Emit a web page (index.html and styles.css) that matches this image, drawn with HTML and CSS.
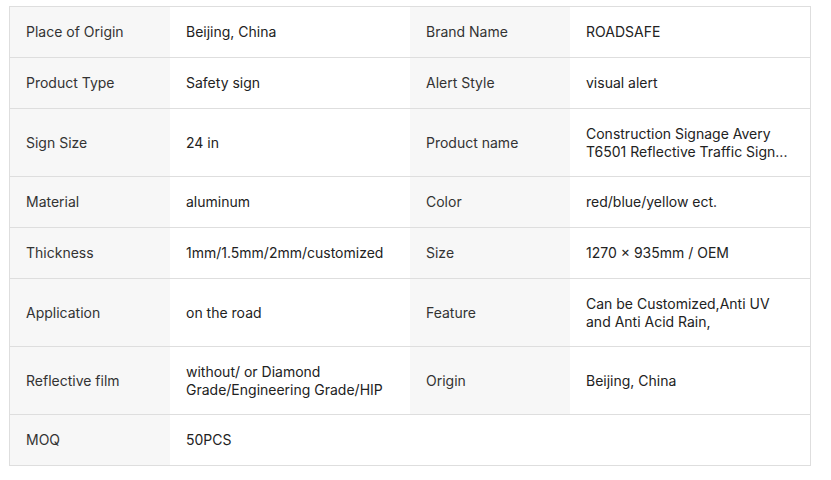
FILE: index.html
```html
<!DOCTYPE html>
<html lang="en">
<head>
    <meta charset="UTF-8">
    <meta name="viewport" content="width=device-width, initial-scale=1.0">
    <title>Product Attributes</title>
    <link rel="stylesheet" href="styles.css">
</head>
<body>

    <div class="attrs">
        <div class="row">
            <div class="label">Place of Origin</div>
            <div class="value">Beijing, China</div>
            <div class="label">Brand Name</div>
            <div class="value">ROADSAFE</div>
        </div>
        <div class="row">
            <div class="label">Product Type</div>
            <div class="value">Safety sign</div>
            <div class="label">Alert Style</div>
            <div class="value">visual alert</div>
        </div>
        <div class="row">
            <div class="label">Sign Size</div>
            <div class="value">24 in</div>
            <div class="label">Product name</div>
            <div class="value">Construction Signage Avery T6501 Reflective Traffic Sign...</div>
        </div>
        <div class="row">
            <div class="label">Material</div>
            <div class="value">aluminum</div>
            <div class="label">Color</div>
            <div class="value">red/blue/yellow ect.</div>
        </div>
        <div class="row">
            <div class="label">Thickness</div>
            <div class="value">1mm/1.5mm/2mm/customized</div>
            <div class="label">Size</div>
            <div class="value">1270 × 935mm / OEM</div>
        </div>
        <div class="row">
            <div class="label">Application</div>
            <div class="value">on the road</div>
            <div class="label">Feature</div>
            <div class="value">Can be Customized,Anti UV and Anti Acid Rain,</div>
        </div>
        <div class="row">
            <div class="label">Reflective film</div>
            <div class="value">without/ or Diamond Grade/Engineering Grade/HIP</div>
            <div class="label">Origin</div>
            <div class="value">Beijing, China</div>
        </div>
        <div class="row">
            <div class="label">MOQ</div>
            <div class="value">50PCS</div>
        </div>
    </div>

</body>
</html>
```

FILE: styles.css
```css
* {
    box-sizing: border-box;
}

body {
    margin: 0;
    padding: 6px 9px;
    background: #ffffff;
    font-family: 'Inter', 'Noto Sans', sans-serif;
    font-size: 14px;
    line-height: 17.5px;
}

.attrs {
    width: 802px;
    border: 1px solid #dedede;
}

.row {
    display: grid;
    grid-template-columns: 160px 240px 160px 240px;
    border-top: 1px solid #dedede;
}

.row:first-child {
    border-top: none;
}

.label,
.value {
    display: flex;
    align-items: center;
    min-height: 50px;
    padding: 16px;
}

.label {
    background-color: #f7f7f7;
    color: #333333;
}

.value {
    color: #222222;
}
```
